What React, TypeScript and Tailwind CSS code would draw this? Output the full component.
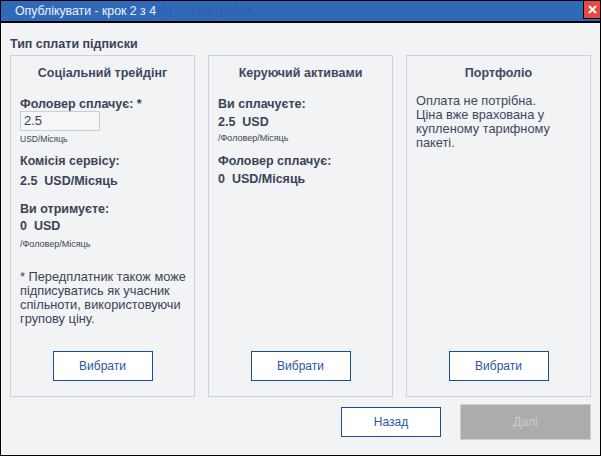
import React from "react";

const font = { fontFamily: '"Liberation Sans", Arial, sans-serif' };

const SelectButton = () => (
    <div className="flex justify-center mt-auto mb-[15px]">
        <button className="w-[100px] h-[30px] bg-white border border-[#1b4ea3] text-[12px] text-[#2d55a0]">
            Вибрати
        </button>
    </div>
);

const Panel = ({ title, children }: { title: string; children: React.ReactNode }) => (
    <div className="border border-[#c9d2e0] flex flex-col px-[9px] pt-[9px] h-[342px]">
        <div className="text-center font-bold text-[12.5px] leading-[16px] text-[#3e4862]">
            {title}
        </div>
        {children}
        <SelectButton />
    </div>
);

export default function App() {
    return (
        <div
            className="w-[601px] h-[456px] border border-black bg-[#f2f3f5] flex flex-col text-[#3a4358]"
            style={font}
        >
            {/* title bar */}
            <div className="h-[22px] bg-[#3169b9] border-b-2 border-black flex items-center relative">
                <span className="ml-[14px] text-[12.3px] text-[#eef2fa]">Опублікувати - крок 2 з 4</span>
                <span className="ml-[1px] text-[12.3px] text-[#2c5eae]">(0)</span>
                <span className="ml-[20px] text-[12.3px] text-[#2c5eae]">Настройки</span>
                <div className="absolute right-0 top-0 w-[17px] h-[18px] bg-[#e84848] border-l border-b border-black flex items-center justify-center">
                    <svg width="9" height="9" viewBox="0 0 9 9">
                        <path d="M1 1 L8 8 M8 1 L1 8" stroke="white" strokeWidth="2" />
                    </svg>
                </div>
            </div>

            <div className="px-[9px] flex flex-col">
                <div className="mt-[13px] font-bold text-[12.5px] leading-[16px] text-[#3a4358]">
                    Тип сплати підписки
                </div>

                <div className="grid grid-cols-[185px_185px_185px] gap-[13px] mt-[3px]">
                    <Panel title="Соціальний трейдінг">
                        <div className="mt-[16px] font-bold text-[12.5px] leading-[14px]">Фоловер сплачує: *</div>
                        <div className="w-[80px] h-[20px] border border-[#c7cfda] bg-[#f5f6f8] px-[3px] text-[13px] leading-[18px] text-[#3a4358]">
                            2.5
                        </div>
                        <div className="mt-[3px] text-[8.5px] leading-[10px]">USD/Місяць</div>
                        <div className="mt-[9px] font-bold text-[12.5px] leading-[16px]">Комісія сервісу:</div>
                        <div className="mt-[4px] font-bold text-[12.5px] leading-[16px] whitespace-pre">2.5  USD/Місяць</div>
                        <div className="mt-[12px] font-bold text-[12.5px] leading-[16px]">Ви отримуєте:</div>
                        <div className="mt-[1px] font-bold text-[12.5px] leading-[16px] whitespace-pre">0  USD</div>
                        <div className="mt-[5px] text-[9px] leading-[10px]">/Фоловер/Місяць</div>
                        <div className="mt-[21px] text-[12.8px] leading-[14px] whitespace-nowrap">
                            * Передплатник також може
                            <br />
                            підписуватись як учасник
                            <br />
                            спільноти, використовуючи
                            <br />
                            групову ціну.
                        </div>
                    </Panel>

                    <Panel title="Керуючий активами">
                        <div className="mt-[15px] font-bold text-[12.5px] leading-[16px]">Ви сплачуєте:</div>
                        <div className="mt-[2px] font-bold text-[12.5px] leading-[16px] whitespace-pre">2.5  USD</div>
                        <div className="mt-[3px] text-[9px] leading-[10px]">/Фоловер/Місяць</div>
                        <div className="mt-[10px] font-bold text-[12.5px] leading-[16px]">Фоловер сплачує:</div>
                        <div className="mt-[2px] font-bold text-[12.5px] leading-[16px] whitespace-pre">0  USD/Місяць</div>
                    </Panel>

                    <Panel title="Портфоліо">
                        <div className="mt-[13px] text-[12.8px] leading-[14px] text-[#3d4860] whitespace-nowrap">
                            Оплата не потрібна.
                            <br />
                            Ціна вже врахована у
                            <br />
                            купленому тарифному
                            <br />
                            пакеті.
                        </div>
                    </Panel>
                </div>

                <div className="flex justify-end items-center gap-[19px] mt-[7px]">
                    <button className="w-[100px] h-[30px] bg-white border border-[#1b4ea3] text-[12px] text-[#2d55a0]">
                        Назад
                    </button>
                    <button className="w-[131px] h-[36px] bg-[#adacaa] border border-[#ccd1d9] text-[12px] text-[#c8ccd4]">
                        Далі
                    </button>
                </div>
            </div>
        </div>
    );
}
